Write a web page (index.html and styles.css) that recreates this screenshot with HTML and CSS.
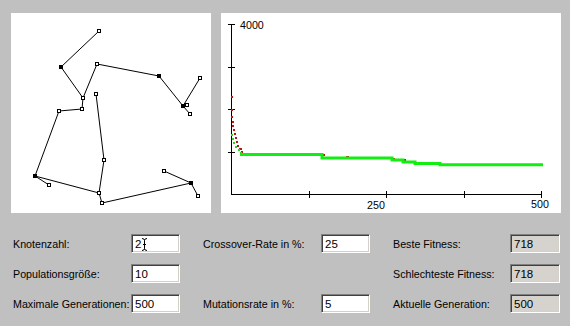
FILE: index.html
```html
<!DOCTYPE html>
<html lang="de">
<head>
<meta charset="utf-8">
<title>TSP Genetischer Algorithmus</title>
<link rel="stylesheet" href="styles.css">
</head>
<body>
<div class="app">
  <div class="top">
    <div class="panel tour">
      <svg width="200" height="200" viewBox="0 0 200 200">
        <g stroke="#000" stroke-width="1" fill="none">
          <polyline points="88,18 50,54 72,85 86,51 148,63 172,93 189,65"/>
          <line x1="172" y1="93" x2="179" y2="101"/>
          <polyline points="72,85 71,96 48,98 24,163 38,172"/>
          <polyline points="24,163 88,180 93,147 85,81"/>
          <polyline points="88,180 91,190 180,170 153,158"/>
          <line x1="180" y1="170" x2="187" y2="183"/>
        </g>
        <g stroke="#000" stroke-width="1" fill="#fff">
          <rect x="86.5" y="16.5" width="3" height="3"/>
          <rect x="48.5" y="52.5" width="3" height="3" fill="#000"/>
          <rect x="70.5" y="83.5" width="3" height="3"/>
          <rect x="84.5" y="49.5" width="3" height="3"/>
          <rect x="146.5" y="61.5" width="3" height="3" fill="#000"/>
          <rect x="170.5" y="91.5" width="3" height="3" fill="#000"/>
          <rect x="187.5" y="63.5" width="3" height="3"/>
          <rect x="174.5" y="90.5" width="3" height="3"/>
          <rect x="177.5" y="99.5" width="3" height="3"/>
          <rect x="69.5" y="94.5" width="3" height="3"/>
          <rect x="46.5" y="96.5" width="3" height="3"/>
          <rect x="22.5" y="161.5" width="3" height="3" fill="#000"/>
          <rect x="36.5" y="170.5" width="3" height="3"/>
          <rect x="86.5" y="178.5" width="3" height="3"/>
          <rect x="89.5" y="188.5" width="3" height="3"/>
          <rect x="178.5" y="168.5" width="3" height="3" fill="#000"/>
          <rect x="185.5" y="181.5" width="3" height="3"/>
          <rect x="151.5" y="156.5" width="3" height="3"/>
          <rect x="91.5" y="145.5" width="3" height="3"/>
          <rect x="83.5" y="79.5" width="3" height="3"/>
        </g>
      </svg>
    </div>
    <div class="panel chart">
      <svg width="340" height="200" viewBox="0 0 340 200">
        <g stroke="#000" stroke-width="1">
          <line x1="10.5" y1="11" x2="10.5" y2="181.5"/>
          <line x1="10" y1="181.5" x2="321" y2="181.5"/>
          <line x1="7" y1="11.5" x2="14" y2="11.5"/>
          <line x1="7" y1="54.5" x2="14" y2="54.5"/>
          <line x1="7" y1="96.5" x2="14" y2="96.5"/>
          <line x1="7" y1="139.5" x2="14" y2="139.5"/>
          <line x1="88.5" y1="178" x2="88.5" y2="185"/>
          <line x1="165.5" y1="178" x2="165.5" y2="185"/>
          <line x1="243.5" y1="178" x2="243.5" y2="185"/>
          <line x1="320.5" y1="178" x2="320.5" y2="185"/>
        </g>
        <g class="axis-label">
          <text x="19" y="16">4000</text>
          <text x="146" y="196">250</text>
          <text x="310" y="195">500</text>
        </g>
        <g fill="#c81010">
          <rect x="10" y="83" width="2" height="2"/>
          <rect x="10" y="96" width="2" height="2"/>
          <rect x="10" y="103" width="2" height="2"/>
          <rect x="11" y="108" width="2" height="2"/>
          <rect x="11" y="112" width="2" height="2"/>
          <rect x="12" y="116" width="2" height="2"/>
          <rect x="13" y="120" width="2" height="2"/>
          <rect x="14" y="124" width="2" height="2"/>
          <rect x="15" y="128" width="2" height="2"/>
          <rect x="16" y="132" width="2" height="2"/>
          <rect x="18" y="135" width="3" height="2"/>
          <rect x="20" y="138" width="2" height="2"/>
          <rect x="101" y="141" width="3" height="2"/>
          <rect x="125" y="143" width="3" height="2"/>
          <rect x="170" y="145" width="4" height="2"/>
          <rect x="181" y="146" width="4" height="2"/>
        </g>
        <g fill="#22dd22">
          <rect x="10" y="121" width="2" height="2"/>
          <rect x="11" y="125" width="2" height="2"/>
          <rect x="12" y="129" width="2" height="2"/>
          <rect x="14" y="133" width="2" height="2"/>
          <rect x="17" y="136" width="2" height="2"/>
          <rect x="19" y="139" width="2" height="2"/>
        </g>
        <g stroke="#11ee11" stroke-width="3" fill="none">
          <polyline points="19,141.5 101,141.5 101,145 171,145 171,147 182,147 182,149 194,149 194,150.5 219,150.5 219,151.8 322,151.8"/>
        </g>
      </svg>
    </div>
  </div>
  <div class="form">
    <label class="lbl">Knotenzahl:</label>
    <div class="cell"><span class="field cursorfield">2<svg class="ibeam" width="7" height="13" viewBox="0 0 7 13"><path d="M1 0.5 Q3.5 0.5 3.5 2.5 V10.5 Q3.5 12.5 1 12.5 M6 0.5 Q3.5 0.5 3.5 2.5 M3.5 10.5 Q3.5 12.5 6 12.5 M2 6.5 H5" stroke="#000" stroke-width="1" fill="none"/></svg></span></div>
    <label class="lbl">Crossover-Rate in %:</label>
    <div class="cell"><span class="field">25</span></div>
    <label class="lbl">Beste Fitness:</label>
    <div class="cell"><span class="field ro">718</span></div>

    <label class="lbl">Populationsgröße:</label>
    <div class="cell"><span class="field">10</span></div>
    <span class="lbl"></span>
    <span class="cell"></span>
    <label class="lbl">Schlechteste Fitness:</label>
    <div class="cell"><span class="field ro">718</span></div>

    <label class="lbl">Maximale Generationen:</label>
    <div class="cell"><span class="field">500</span></div>
    <label class="lbl">Mutationsrate in %:</label>
    <div class="cell"><span class="field">5</span></div>
    <label class="lbl">Aktuelle Generation:</label>
    <div class="cell"><span class="field ro">500</span></div>
  </div>
</div>
</body>
</html>
```
FILE: styles.css
```css
html, body {
  margin: 0;
  padding: 0;
  background: #ffffff;
}
body {
  font-family: "Liberation Sans", Arial, sans-serif;
  font-size: 10.7px;
  color: #000;
}
.app {
  width: 570px;
  height: 326px;
  background: #c0c0c0;
  box-sizing: border-box;
  padding: 13px 0 0 11px;
}
.top {
  display: flex;
  gap: 10px;
}
.panel {
  background: #fff;
  height: 200px;
}
.panel svg {
  display: block;
}
.tour {
  width: 200px;
}
.chart {
  width: 340px;
}
.axis-label text {
  font-family: "Liberation Sans", Arial, sans-serif;
  font-size: 10.7px;
  fill: #000;
}
.form {
  display: grid;
  grid-template-columns: 118px 72px 118px 72px 117px 50px;
  grid-auto-rows: 19px;
  row-gap: 11px;
  margin-top: 21px;
  margin-left: 2px;
}
.lbl {
  display: flex;
  align-items: center;
  white-space: nowrap;
}
.cell {
  display: flex;
  align-items: stretch;
}
.field {
  position: relative;
  display: flex;
  align-items: center;
  box-sizing: border-box;
  width: 49px;
  height: 19px;
  padding-left: 3px;
  background: #fff;
  border-top: 1px solid #808080;
  border-left: 1px solid #808080;
  border-right: 1px solid #ffffff;
  border-bottom: 1px solid #ffffff;
  box-shadow: inset 1px 1px 0 #404040, inset -1px -1px 0 #d4d0c8;
  font-size: 11.5px;
}
.field.ro {
  width: 50px;
  background: #d6d3ce;
}
.ibeam {
  position: absolute;
  left: 9px;
  top: 3px;
}
```
